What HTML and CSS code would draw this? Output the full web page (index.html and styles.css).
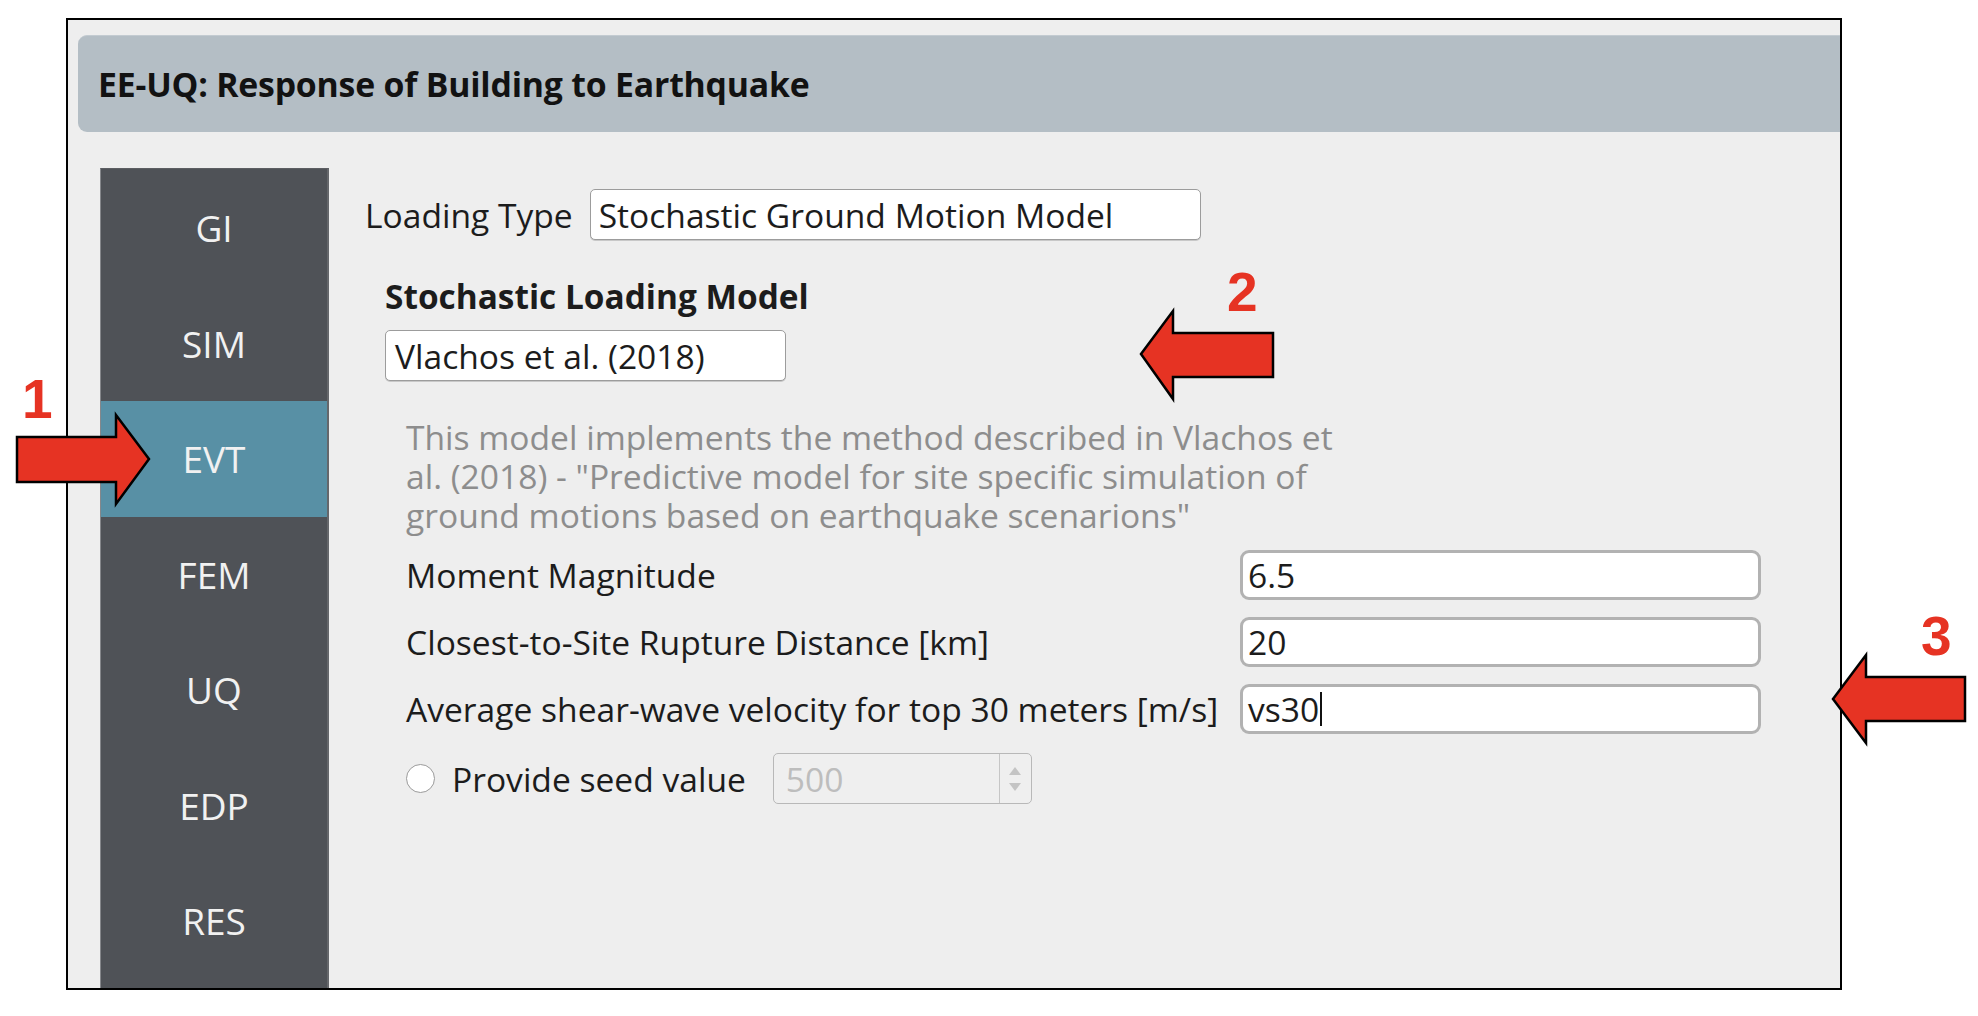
FILE: index.html
```html
<!DOCTYPE html>
<html>
<head>
<meta charset="utf-8">
<title>EE-UQ</title>
<link rel="stylesheet" href="styles.css">
</head>
<body>
<div class="frame">
  <div class="header">EE-UQ: Response of Building to Earthquake</div>
  <div class="main">
    <nav class="sidebar">
      <div class="tab">GI</div>
      <div class="tab">SIM</div>
      <div class="tab active">EVT</div>
      <div class="tab">FEM</div>
      <div class="tab">UQ</div>
      <div class="tab">EDP</div>
      <div class="tab">RES</div>
    </nav>
    <section class="content">
      <div class="loading-row">
        <span class="label">Loading Type</span>
        <div class="combo combo-wide">Stochastic Ground Motion Model</div>
      </div>
      <div class="group">
        <div class="group-title">Stochastic Loading Model</div>
        <div class="combo combo-model">Vlachos et al. (2018)</div>
        <div class="inner">
          <p class="desc">This model implements the method described in Vlachos et al. (2018) - "Predictive model for site specific simulation of ground motions based on earthquake scenarions"</p>
          <div class="fields">
            <span class="label">Moment Magnitude</span>
            <div class="field">6.5</div>
            <span class="label">Closest-to-Site Rupture Distance [km]</span>
            <div class="field">20</div>
            <span class="label">Average shear-wave velocity for top 30 meters [m/s]</span>
            <div class="field">vs30<span class="caret"></span></div>
          </div>
          <div class="seed-row">
            <span class="radio"></span>
            <span class="label">Provide seed value</span>
            <div class="spin">
              <span class="spin-value">500</span>
              <span class="spin-buttons">
                <span class="tri-up"></span>
                <span class="tri-down"></span>
              </span>
            </div>
          </div>
        </div>
      </div>
    </section>
  </div>
</div>
<svg class="annotations" width="1978" height="1016" viewBox="0 0 1978 1016">
  <polygon class="arrow" points="17,437 116,437 116,415 149,459 116,504 116,482 17,482"/>
  <polygon class="arrow" points="1141,354 1173,311 1173,333 1273,333 1273,377 1173,377 1173,399"/>
  <polygon class="arrow" points="1833,699 1866,655 1866,677 1965,677 1965,721 1866,721 1866,743"/>
  <text class="num" x="22" y="418">1</text>
  <text class="num" x="1227" y="311">2</text>
  <text class="num" x="1921" y="655">3</text>
</svg>
</body>
</html>
```
FILE: styles.css
```css
html, body {
  margin: 0;
  padding: 0;
  width: 1978px;
  height: 1016px;
  overflow: hidden;
  background: #ffffff;
  font-family: "Open Sans", "Noto Sans", sans-serif;
  color: #1c1c1c;
}

.frame {
  box-sizing: border-box;
  width: 1776px;
  height: 972px;
  margin: 18px 0 0 66px;
  border: 2px solid #000;
  background: #eeeeee;
  overflow: hidden;
  display: flex;
  flex-direction: column;
}

.header {
  flex: none;
  height: 97px;
  margin: 15px -20px 0 10px;
  padding-left: 20px;
  background: #b4bec5;
  border-top: 1px solid #c3cbd1;
  box-sizing: border-box;
  border-radius: 9px 0 0 9px;
  display: flex;
  align-items: center;
  font-weight: 700;
  font-size: 33.8px;
  color: #121212;
  letter-spacing: -0.2px;
}

.main {
  flex: 1;
  display: flex;
  margin-top: 36px;
  padding-left: 32px;
  min-height: 0;
}

.sidebar {
  flex: none;
  width: 229px;
  box-sizing: border-box;
  background: #4f5257;
  border-left: 1px solid #85878b;
  border-right: 2px solid #65676b;
  border-top: 1px solid #5c5e62;
  padding-top: 1px;
}

.tab {
  height: 115.5px;
  display: flex;
  align-items: center;
  justify-content: center;
  color: #f1f1f1;
  font-size: 37px;
}

.tab.active {
  background: #5890a5;
}

.content {
  flex: 1;
  padding: 21px 0 0 36px;
  font-size: 33.6px;
}

.loading-row {
  display: flex;
  align-items: center;
  gap: 17px;
  height: 51px;
}

.label {
  white-space: nowrap;
  line-height: 40px;
}

.combo {
  box-sizing: border-box;
  height: 51px;
  background: #ffffff;
  border: 1px solid #9c9c9c;
  border-radius: 5px;
  display: flex;
  align-items: center;
  padding-left: 8px;
  white-space: nowrap;
  box-shadow: 0 1px 0 #c8c8c8;
}

.combo-wide {
  width: 611px;
}

.group {
  margin-left: 20px;
}

.group-title {
  margin-top: 36px;
  font-weight: 700;
  line-height: 40px;
  font-size: 33.4px;
}

.combo-model {
  width: 401px;
  margin-top: 14px;
  padding-left: 9px;
}

.inner {
  margin-left: 21px;
}

.desc {
  margin: 37px 0 0 0;
  width: 930px;
  line-height: 39px;
  color: #8d8d8d;
}

.fields {
  margin-top: 15px;
  display: grid;
  grid-template-columns: 834px 521px;
  grid-auto-rows: 50px;
  row-gap: 17px;
  align-items: center;
}

.field {
  box-sizing: border-box;
  height: 50px;
  background: #ffffff;
  border: 3px solid #b2b2b2;
  border-radius: 9px;
  display: flex;
  align-items: center;
  padding-left: 5px;
}

.caret {
  display: inline-block;
  width: 2px;
  height: 34px;
  background: #111;
  margin-left: 1px;
}

.seed-row {
  margin-top: 19px;
  height: 51px;
  display: flex;
  align-items: center;
}

.radio {
  width: 27px;
  height: 27px;
  border: 1px solid #9a9a9a;
  border-radius: 50%;
  background: #ffffff;
  margin-right: 17px;
  flex: none;
}

.spin {
  margin-left: 27px;
  box-sizing: border-box;
  width: 259px;
  height: 51px;
  border: 1px solid #b8b8b8;
  border-radius: 5px;
  background: #efefef;
  display: flex;
  align-items: stretch;
}

.spin-value {
  flex: 1;
  display: flex;
  align-items: center;
  padding-left: 12px;
  color: #bdbdbd;
}

.spin-buttons {
  width: 31px;
  border-left: 1px solid #c6c6c6;
  display: flex;
  flex-direction: column;
  align-items: center;
  justify-content: center;
  gap: 8px;
}

.tri-up {
  width: 0;
  height: 0;
  border-left: 6px solid transparent;
  border-right: 6px solid transparent;
  border-bottom: 8px solid #c4c4c4;
}

.tri-down {
  width: 0;
  height: 0;
  border-left: 6px solid transparent;
  border-right: 6px solid transparent;
  border-top: 8px solid #c4c4c4;
}

.annotations {
  position: absolute;
  left: 0;
  top: 0;
  pointer-events: none;
}

.arrow {
  fill: #e63323;
  stroke: #000;
  stroke-width: 2.5;
  stroke-linejoin: miter;
}

.num {
  fill: #e63323;
  font-family: "Liberation Sans", Arial, sans-serif;
  font-weight: 700;
  font-size: 55px;
}
```
